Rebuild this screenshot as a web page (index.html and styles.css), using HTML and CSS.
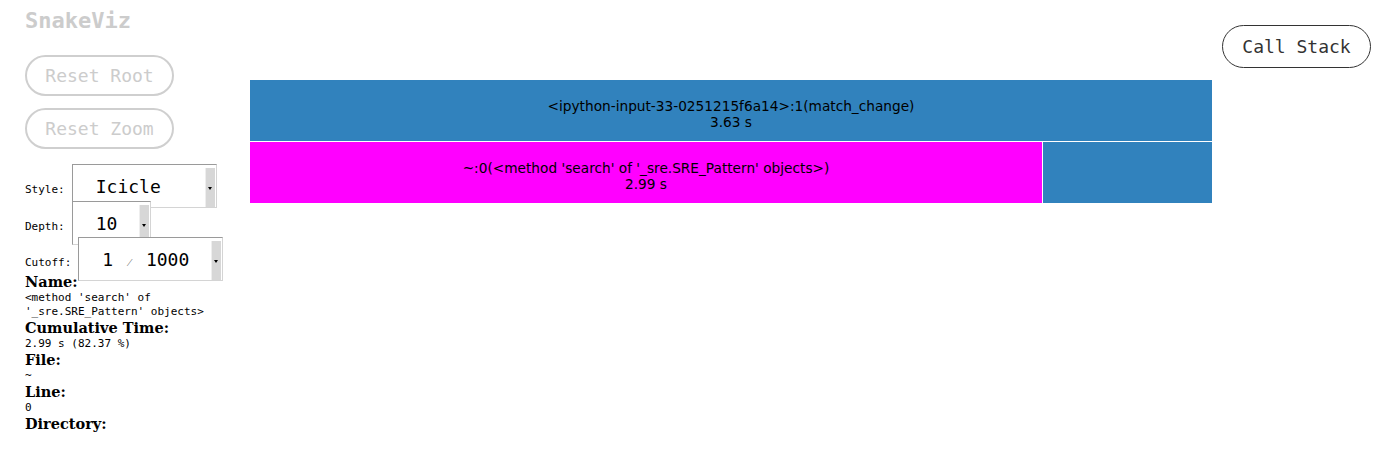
FILE: index.html
```html
<!DOCTYPE html>
<html>
<head>
<meta charset="utf-8">
<title>SnakeViz</title>
<link rel="stylesheet" href="styles.css">
</head>
<body>
<div class="page">
  <aside class="sidebar">
    <h1 class="title">SnakeViz</h1>
    <button class="pill pill-muted">Reset Root</button>
    <button class="pill pill-muted pill-second">Reset Zoom</button>
    <div class="controls">
      <div class="ctl-row row-style">
        <span class="ctl-label">Style:</span>
        <div class="sel sel-style"><span class="sel-text">Icicle</span><span class="sel-arrow"></span></div>
      </div>
      <div class="ctl-row row-depth">
        <span class="ctl-label">Depth:</span>
        <div class="sel sel-depth"><span class="sel-text">10</span><span class="sel-arrow"></span></div>
      </div>
      <div class="ctl-row row-cutoff">
        <span class="ctl-label">Cutoff:</span>
        <div class="sel sel-cutoff"><span class="sel-text">1 <span class="frac">⁄</span> 1000</span><span class="sel-arrow"></span></div>
      </div>
    </div>
    <div class="info">
      <div class="info-h">Name:</div>
      <div class="info-v">&lt;method 'search' of<br>'_sre.SRE_Pattern' objects&gt;</div>
      <div class="info-h">Cumulative Time:</div>
      <div class="info-v">2.99 s (82.37 %)</div>
      <div class="info-h">File:</div>
      <div class="info-v">~</div>
      <div class="info-h">Line:</div>
      <div class="info-v">0</div>
      <div class="info-h">Directory:</div>
    </div>
  </aside>
  <main class="chart">
    <div class="chart-row">
      <div class="cell cell-blue cell-full">
        <div class="cell-text">&lt;ipython-input-33-0251215f6a14&gt;:1(match_change)<br>3.63 s</div>
      </div>
    </div>
    <div class="chart-row">
      <div class="cell cell-magenta" style="width:792px">
        <div class="cell-text">~:0(&lt;method 'search' of '_sre.SRE_Pattern' objects&gt;)<br>2.99 s</div>
      </div>
      <div class="cell cell-blue cell-rest"></div>
    </div>
  </main>
  <div class="right">
    <button class="pill pill-dark">Call Stack</button>
  </div>
</div>
</body>
</html>
```

FILE: styles.css
```css
html, body {
  margin: 0;
  padding: 0;
  background: #fff;
}

.page {
  display: flex;
  align-items: flex-start;
  width: 1380px;
  height: 451px;
  overflow: hidden;
}

.sidebar {
  width: 225px;
  padding-left: 25px;
  flex: none;
  display: flex;
  flex-direction: column;
  align-items: flex-start;
}

.title {
  margin: 8px 0 0 0;
  font-family: "DejaVu Sans Mono", monospace;
  font-weight: bold;
  font-size: 22px;
  line-height: 26px;
  color: #cccccc;
}

.pill {
  box-sizing: border-box;
  font-family: "DejaVu Sans Mono", monospace;
  font-size: 18px;
  background: #fff;
  border-radius: 22px;
  padding: 0;
  cursor: pointer;
}

.pill-muted {
  width: 149px;
  height: 41px;
  margin-top: 21px;
  border: 2px solid #cfcfcf;
  color: #cccccc;
}

.pill-second {
  margin-top: 12px;
}

.pill-dark {
  width: 149px;
  height: 43px;
  border: 1.5px solid #333;
  color: #333;
}

.controls {
  margin-top: 15px;
  display: flex;
  flex-direction: column;
}

.ctl-row {
  display: flex;
  align-items: baseline;
  position: relative;
}

.row-style { height: 37px; }
.row-depth { height: 36px; }
.row-cutoff { height: 36px; }

.ctl-label {
  font-family: "DejaVu Sans Mono", monospace;
  font-size: 11px;
  color: #000;
}

.sel {
  box-sizing: border-box;
  height: 44px;
  display: inline-flex;
  align-items: center;
  background: #fff;
  border-top: 1px solid #9a9a9a;
  border-left: 1px solid #9a9a9a;
  border-right: 1px solid #d4d4d4;
  border-bottom: 1px solid #d4d4d4;
  flex: none;
  position: relative;
  margin-left: 7px;
}

.sel-style { width: 145px; }
.sel-depth { width: 79px; }
.sel-cutoff { width: 145px; }

.sel-text {
  font-family: "DejaVu Sans Mono", monospace;
  font-size: 18px;
  color: #000;
  padding-left: 23px;
  flex: 1;
  white-space: nowrap;
}

.frac {
  display: inline-block;
  width: 11px;
  text-align: center;
  font-size: 11px;
  color: #555;
}

.sel-arrow {
  align-self: stretch;
  width: 9px;
  margin: 3px 1px 0 0;
  background-color: #e6e6e6;
  background-image: radial-gradient(#c4c4c4 0.6px, transparent 0.8px);
  background-size: 2px 2px;
  border-left: 1px solid #eee;
  position: relative;
}

.sel-arrow::after {
  content: "";
  position: absolute;
  left: 2px;
  top: 50%;
  margin-top: -1px;
  border-left: 2.5px solid transparent;
  border-right: 2.5px solid transparent;
  border-top: 3px solid #000;
}

.info {
  display: flex;
  flex-direction: column;
}

.info-h {
  font-family: "DejaVu Serif", serif;
  font-weight: bold;
  font-size: 14.5px;
  line-height: 18px;
  color: #000;
}

.info-v {
  font-family: "DejaVu Sans Mono", monospace;
  font-size: 11px;
  line-height: 14px;
  color: #000;
  white-space: nowrap;
}

.chart {
  margin-top: 80px;
  width: 962px;
  flex: none;
  display: flex;
  flex-direction: column;
  gap: 1px;
}

.chart-row {
  display: flex;
  height: 61px;
  gap: 1px;
}

.cell {
  height: 61px;
  box-sizing: border-box;
}

.cell-full { width: 962px; }
.cell-rest { flex: 1; }

.cell-blue { background: #3182bd; }
.cell-magenta { background: #ff00ff; }

.cell-text {
  padding-top: 18px;
  text-align: center;
  font-family: "DejaVu Sans", sans-serif;
  font-size: 13.7px;
  line-height: 16px;
  color: #000;
  white-space: nowrap;
}

.right {
  margin-top: 25px;
  margin-left: 10px;
  flex: none;
}
```
